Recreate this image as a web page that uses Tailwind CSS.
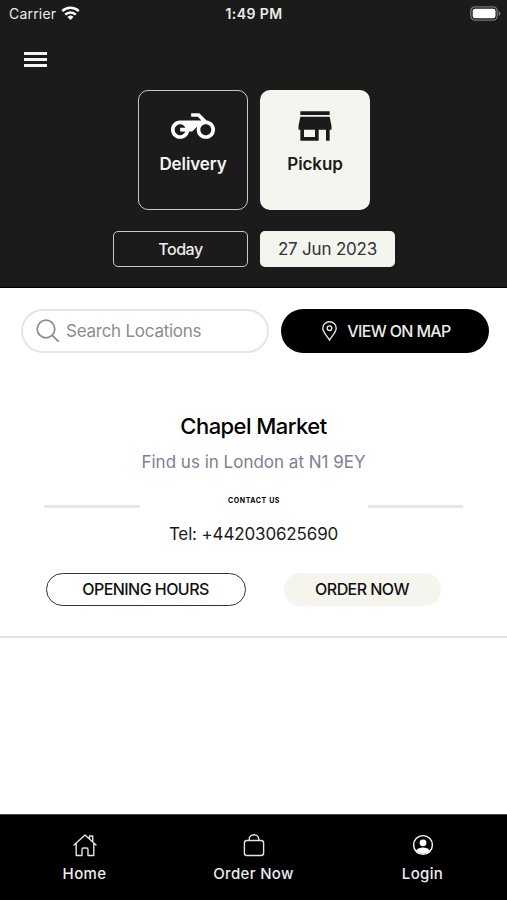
<!DOCTYPE html>
<html lang="en">
<head>
<meta charset="utf-8">
<title>Locations</title>
<script src="https://cdn.jsdelivr.net/npm/@tailwindcss/browser@4"></script>
</head>
<body class="w-[507px] h-[900px] overflow-hidden bg-white font-['Inter','Liberation_Sans',sans-serif] flex flex-col text-black">
  <header class="h-[288px] shrink-0 bg-[#1b1b1b] border-b border-black flex flex-col">
    <div class="h-7 grid grid-cols-3 items-center pl-[9px] pr-[6px] text-[#ececec]">
      <div class="flex items-center gap-[5px]">
        <span class="text-[14px] leading-7 tracking-[0.2px]">Carrier</span>
        <svg class="w-[19px] h-[14px] mb-[2px]" viewBox="0 0 19 14" fill="none" stroke="#fff" stroke-width="2.5"><path d="M1.200 5.200a12 12 0 0 1 16.600 0M4.200 8.600a7.600 7.600 0 0 1 10.600 0"/><path d="M9.500 14 6.500 11a4.300 4.300 0 0 1 6 0Z" fill="#fff" stroke="none"/></svg>
      </div>
      <span class="text-[14px] leading-7 font-semibold tracking-[0.4px] text-center pr-[2px]">1:49 PM</span>
      <svg class="w-[31px] h-[15px] justify-self-end mb-[2px]" viewBox="0 0 31 15"><rect x=".8" y=".8" width="26.400" height="13.400" rx="4.200" fill="none" stroke="#777" stroke-width="1.300"/><rect x="2.700" y="2.700" width="22.800" height="9.600" rx="2.400" fill="#fff"/><path d="M28.600 5.200c2.400.8 2.400 3.800 0 4.600Z" fill="#777"/></svg>
    </div>
    <div class="h-[62px] pl-6 pt-6 flex flex-col gap-[3.5px]">
      <div class="w-[22.5px] h-[2.6px] bg-[#f4f4f0]"></div>
      <div class="w-[22.5px] h-[2.6px] bg-[#f4f4f0]"></div>
      <div class="w-[22.5px] h-[2.6px] bg-[#f4f4f0]"></div>
    </div>
    <div class="flex justify-center gap-3 pl-px">
      <div class="w-[110px] h-[120px] rounded-[10px] border-[1.5px] border-[#c8c8c8] text-[#f4f4f0] flex flex-col items-center pt-[13px]">
        <svg class="w-11 h-11" viewBox="0 0 24 24" fill="#fff"><path d="M19.44 9.03L15.41 5H11v2h3.59l2 2H5c-2.8 0-5 2.2-5 5s2.2 5 5 5c2.46 0 4.45-1.69 4.9-4h1.65l2.77-2.77c-.21.54-.32 1.14-.32 1.77 0 2.8 2.2 5 5 5s5-2.2 5-5c0-2.65-1.97-4.77-4.56-4.97zM7.82 15C7.4 16.15 6.28 17 5 17c-1.63 0-3-1.37-3-3s1.37-3 3-3c1.28 0 2.4.85 2.82 2H5v2h2.82zM19 17c-1.66 0-3-1.34-3-3s1.34-3 3-3 3 1.34 3 3-1.34 3-3 3z"/></svg>
        <span class="text-[17px] leading-6 font-semibold tracking-[-0.1px] mt-1">Delivery</span>
      </div>
      <div class="w-[110px] h-[120px] rounded-[10px] bg-[#f5f5f0] text-[#1b1b1b] flex flex-col items-center pt-[14px]">
        <svg class="w-11 h-11" viewBox="0 0 24 24" fill="#1b1b1b"><path d="M20 4H4v2h16V4zm1 10v-2l-1-5H4l-1 5v2h1v6h10v-6h4v6h2v-6h1zm-9 4H6v-4h6v4z"/></svg>
        <span class="text-[17px] leading-6 font-semibold tracking-[-0.1px] mt-1">Pickup</span>
      </div>
    </div>
    <div class="flex justify-center gap-3 mt-[21px] pl-px text-[17px]">
      <div class="w-[135px] h-9 rounded-[5px] border-[1.5px] border-[#c8c8c8] text-[#ececec] text-[16px] tracking-[-0.5px] font-medium flex items-center justify-center">Today</div>
      <div class="w-[135px] h-9 rounded-[5px] bg-[#f5f5f0] text-[#333] tracking-[-0.2px] pt-[2px] flex items-center justify-center">27 Jun 2023</div>
    </div>
  </header>
  <main class="flex-1 flex flex-col">
    <div class="flex gap-3 pl-[21px] pt-[21px]">
      <div class="w-[248px] h-11 rounded-full border-2 border-[#e4e4e4] flex items-center pl-[13px] text-[#8c8c8c]">
        <svg class="w-6 h-6 shrink-0" viewBox="0 0 24 24" fill="none" stroke="#8c8c8c" stroke-width="1.7"><circle cx="10" cy="10" r="8.8"/><path d="m16.3 16.3 6.3 6.3"/></svg>
        <span class="text-[17px] tracking-[-0.25px] ml-1.5 pt-[2px]">Search Locations</span>
      </div>
      <div class="w-[208px] h-11 rounded-full bg-black text-[#ececec] flex items-center justify-center gap-2.5 pl-[3px]">
        <svg class="w-[15px] h-5" viewBox="0 0 15 20" fill="none" stroke="#e4e4e4" stroke-width="1.4"><path d="M7.500 19C5.200 15.400.8 11 .8 7.200a6.700 6.500 0 0 1 13.400 0C14.200 11 9.800 15.400 7.500 19Z"/><circle cx="7.500" cy="7.200" r="2.300"/></svg>
        <span class="text-[16px] tracking-[-0.65px] font-medium">VIEW ON MAP</span>
      </div>
    </div>
    <section class="h-[285px] border-b-2 border-[#e2e2e2] flex flex-col items-center">
      <h1 class="text-[22px] leading-7 font-medium tracking-[-0.55px] mt-[59px]">Chapel Market</h1>
      <p class="text-[17px] leading-6 text-[#817e94] mt-[10px]">Find us in London at N1 9EY</p>
      <div class="w-[420px] h-3 mt-[21px] flex items-center justify-between">
        <div class="w-24 h-[2.5px] bg-[#e6e6e6] mt-[11px]"></div>
        <span class="text-[7px] leading-3 font-bold tracking-[0.6px]">CONTACT US</span>
        <div class="w-[95px] h-[2.5px] bg-[#e6e6e6] mt-[11px]"></div>
      </div>
      <p class="text-[17px] leading-6 text-[#1b1b1b] tracking-[-0.15px] mt-[15px]">Tel: +442030625690</p>
      <div class="w-full flex gap-[38px] pl-[45.5px] mt-[27px] text-[16px] font-medium tracking-[-0.55px] text-[#111]">
        <div class="w-[200px] h-[33px] rounded-full border-[1.5px] border-[#333] flex items-center justify-center pb-[2px]">OPENING HOURS</div>
        <div class="w-[157px] h-[33px] rounded-full bg-[#f5f5ee] flex items-center justify-center pb-[2px]">ORDER NOW</div>
      </div>
    </section>
  </main>
  <nav class="h-[86px] shrink-0 bg-black border-t border-[#444] grid grid-cols-3 text-[#ececec] text-[15px] tracking-[0.35px] font-medium">
    <div class="flex flex-col items-center pt-[18px]">
      <svg class="w-6 h-6" viewBox="0 0 24 24" fill="none" stroke="#e4e4e4" stroke-width="1.400" stroke-linejoin="round" stroke-linecap="round"><path d="M1 12 12 2l11 10M3.200 10.500V22.500H9V16.500q0-1.500 1.500-1.500h3q1.500 0 1.500 1.500v6h5.800v-12M16.500 5.500V3h3.200v5.500"/></svg>
      <span class="leading-6 mt-[5px]">Home</span>
    </div>
    <div class="flex flex-col items-center pt-[18px]">
      <svg class="w-6 h-6" viewBox="0 0 24 24" fill="none" stroke="#e4e4e4" stroke-width="1.400"><rect x="2.400" y="7.500" width="19.200" height="15" rx="2.500"/><path d="M7.200 7.500V6.500a4.800 4.800 0 0 1 9.600 0v1"/></svg>
      <span class="leading-6 mt-[5px]">Order Now</span>
    </div>
    <div class="flex flex-col items-center pt-[18px]">
      <svg class="w-6 h-6" viewBox="0 0 24 24"><circle cx="12" cy="12" r="9.400" fill="none" stroke="#fff" stroke-width="1.400"/><circle cx="12" cy="9.800" r="3.400" fill="#fff"/><path d="M5 17.500c2.500-4 11.500-4 14 0a9.200 9.200 0 0 1-14 0Z" fill="#fff"/></svg>
      <span class="leading-6 mt-[5px]">Login</span>
    </div>
  </nav>
</body>
</html>
